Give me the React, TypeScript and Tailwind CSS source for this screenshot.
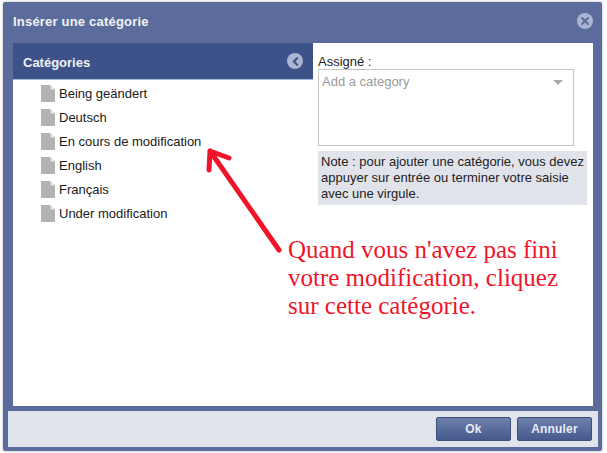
import { ChevronLeft, X } from "lucide-react";

const categories = [
  "Being geändert",
  "Deutsch",
  "En cours de modification",
  "English",
  "Français",
  "Under modification",
];

function FileIcon() {
  return (
    <svg width="14" height="17" viewBox="0 0 14 17" className="shrink-0">
      <path d="M0 0H9L14 5V17H0Z" fill="#b3b3b3" />
      <path d="M9.5 0.5L13.5 4.5H9.5Z" fill="#e6e6e6" />
    </svg>
  );
}

function RoundIcon({ children }: { children: React.ReactNode }) {
  return (
    <div className="flex h-4 w-4 items-center justify-center rounded-full bg-[#aab4d3] text-[#3d5288]">
      {children}
    </div>
  );
}

function DialogButton({ label }: { label: string }) {
  return (
    <button className="h-[24px] w-[75px] rounded-[2px] border border-[#3f4f7c] bg-gradient-to-b from-[#6d80ad] to-[#46598c] text-[12px] font-bold tracking-[0.2px] text-[#e8ebf3]">
      {label}
    </button>
  );
}

export default function App() {
  return (
    <div className="relative h-[453px] w-[607px] overflow-hidden bg-white pl-[3px] pr-[5px] pt-[2px] pb-[2px] font-['Liberation_Sans',Arial,sans-serif]">
      <div className="flex h-[449px] flex-col rounded-[2px] bg-[#5b6c9c] shadow-[0_0_3px_rgba(0,0,0,0.3)]">
        {/* title */}
        <div className="flex h-[41px] shrink-0 items-center justify-between pl-[10px] pr-[9px] pb-[3px]">
          <span className="text-[13px] font-bold leading-none tracking-[0.2px] text-[#f0f2f7]">Insérer une catégorie</span>
          <div className="flex h-4 w-4 items-center justify-center rounded-full bg-[#aab4d3] text-[#5b6c9c]">
            <X size={12} strokeWidth={4} />
          </div>
        </div>

        {/* body */}
        <div className="ml-[10px] mr-[9px] flex h-[363px] shrink-0 bg-white">
          <div className="w-[300px] shrink-0">
            <div className="flex h-[37px] items-center justify-between border-b border-[#a9bcdf] bg-[#3d5288] pl-[10px] pr-[10px] pt-[3px]">
              <span className="text-[13px] font-bold text-[#f0f2f7]">Catégories</span>
              <div className="mb-[3px]">
                <RoundIcon>
                  <ChevronLeft size={13} strokeWidth={4} />
                </RoundIcon>
              </div>
            </div>
            <ul className="flex flex-col pl-[28px] pt-[1px]">
              {categories.map((c) => (
                <li key={c} className="flex h-[24px] items-center gap-[4px] text-[13px] text-[#1a1a1a]">
                  <FileIcon />
                  <span className="pt-[2px]">{c}</span>
                </li>
              ))}
            </ul>
          </div>

          <div className="flex w-[267px] flex-col pl-[5px] pt-[12px]">
            <span className="h-[14px] text-[13px] leading-[13px] text-[#222]">Assigné :</span>
            <div className="flex h-[77px] w-[256px] items-start justify-between border border-[#c4c4c4] px-[3px] pt-[3px]">
              <span className="text-[13px] leading-[18px] text-[#9a9a9a]">Add a category</span>
              <div className="mr-[7px] mt-[7px] h-0 w-0 border-x-[5px] border-t-[5px] border-x-transparent border-t-[#a8a8a8]" />
            </div>
            <div className="mt-[5px] h-[54px] w-[269px] whitespace-nowrap bg-[#e1e3ea] px-[3px] pt-[3px] text-[13px] leading-[16px] text-[#222]">
              Note : pour ajouter une catégorie, vous devez
              <br />
              appuyer sur entrée ou terminer votre saisie
              <br />
              avec une virgule.
            </div>
          </div>
        </div>

        {/* footer */}
        <div className="ml-[5px] mr-[4px] mt-[5px] flex h-[36px] shrink-0 items-center justify-end gap-[6px] bg-[#e1e3ea] pr-[6px]">
          <DialogButton label="Ok" />
          <DialogButton label="Annuler" />
        </div>
      </div>

      {/* annotation over the screenshot */}
      <svg width="90" height="110" viewBox="0 0 90 110" className="absolute left-[200px] top-[145px]">
        <path d="M79 105L10 6M9 25L10 6L29 13" fill="none" stroke="#f0142a" strokeWidth="5" strokeLinecap="round" strokeLinejoin="round" />
      </svg>
      <div className="absolute left-[288px] top-[236px] w-[310px] font-['Liberation_Serif',serif] text-[25px] leading-[28px] text-[#f0142a]">
        Quand vous n'avez pas fini
        <br />
        votre modification, cliquez
        <br />
        sur cette catégorie.
      </div>
    </div>
  );
}
